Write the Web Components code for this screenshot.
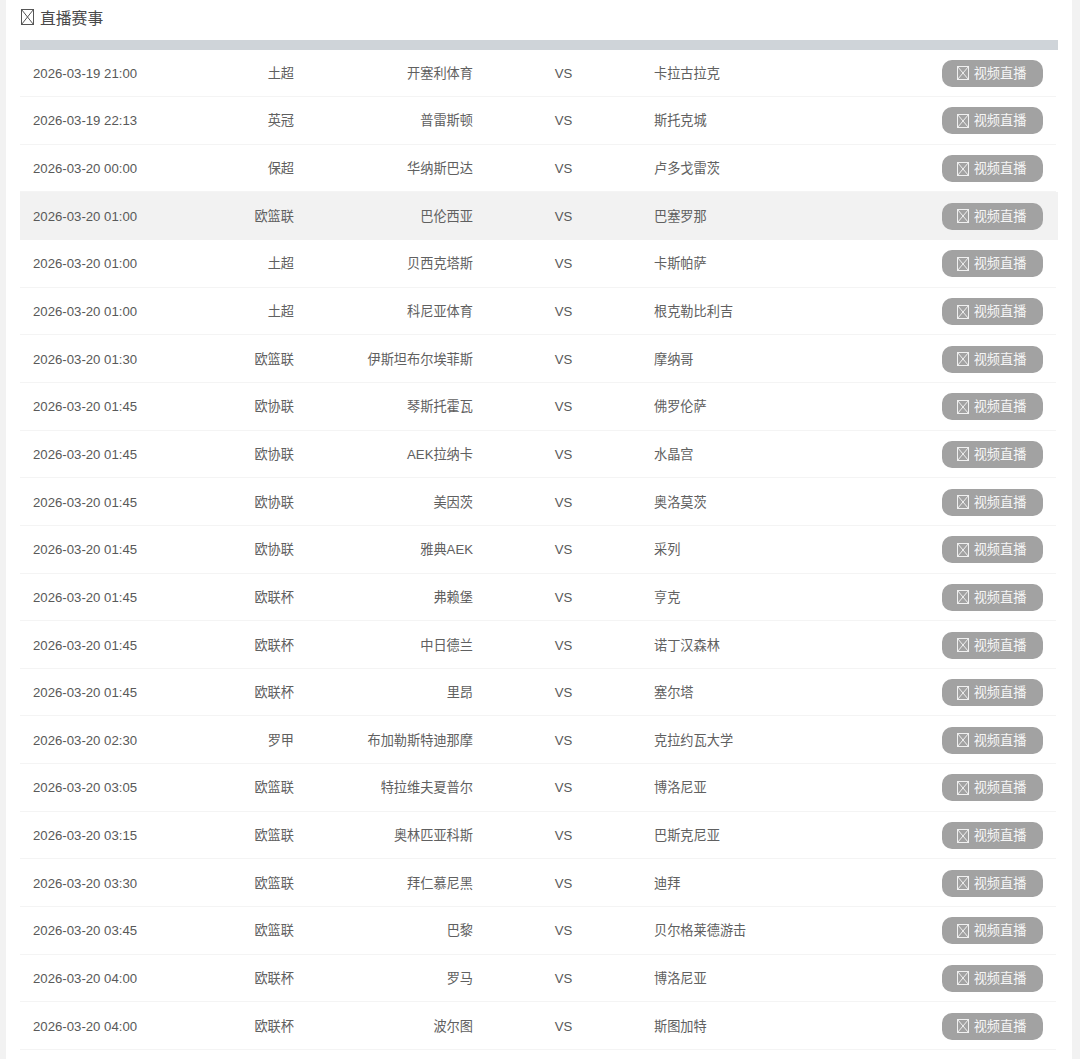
<!DOCTYPE html>
<html lang="zh-CN">
<head>
<meta charset="utf-8">
<title>直播赛事</title>
<style>
    html, body { margin: 0; padding: 0; background: #f2f2f2; }
    body { height: 1059px; overflow: hidden; font-family: "Liberation Sans", "Noto Sans CJK SC", sans-serif; }
</style>
</head>
<body>
<live-panel title-text="直播赛事" id="panel"></live-panel>

<script>
const MISSING_ICON = (w, h, color) => `
    <svg width="${w}" height="${h}" viewBox="0 0 ${w} ${h}" fill="none" stroke="${color}" stroke-width="1">
        <rect x=".5" y=".5" width="${w - 1}" height="${h - 1}"/>
        <path d="M.5 .5L${w - .5} ${h - .5}M${w - .5} .5L.5 ${h - .5}"/>
    </svg>`;

//button at the end of a row
class LiveButton extends HTMLElement {
    constructor() {
        super();
        this.attachShadow({mode: "open"});
        this.shadowRoot.innerHTML = `
            <style>
                :host {
                    display: inline-flex;
                    align-items: center;
                    justify-content: center;
                    gap: 5px;
                    width: 101px;
                    height: 27px;
                    box-sizing: border-box;
                    padding-right: 2px;
                    border-radius: 10px;
                    background: #a2a2a2;
                    color: #f6f6f6;
                    font-size: 13.2px;
                }
                svg { display: block; }
                span { display: block; padding-bottom: 2px; }
            </style>
            ${MISSING_ICON(12, 14, '#f0f0f0')}
            <span><slot></slot></span>
        `;
    }
}

//one match
class MatchRow extends HTMLElement {
    static get observedAttributes() {
        return ['time', 'league', 'home', 'away'];
    }
    constructor() {
        super();
        this.attachShadow({mode: "open"});
    }
    connectedCallback() {
        this.render();
    }
    attributeChangedCallback() {
        this.render();
    }
    render() {
        const a = n => this.getAttribute(n) || '';
        this.shadowRoot.innerHTML = `
            <style>
                :host {
                    display: grid;
                    grid-template-columns: 172px 89px 179px 181px 1fr auto;
                    align-items: center;
                    height: 47.65px;
                    box-sizing: border-box;
                    padding: 0 15px 0 13px;
                    color: #595959;
                    font-size: 13.2px;
                    background: #fff;
                    position: relative;
                }
                :host([active]) { background: #f2f2f2; }
                :host::after {
                    content: "";
                    position: absolute;
                    left: 0;
                    right: 2px;
                    bottom: 0;
                    height: 1px;
                    background: #f4f4f4;
                }
                :host([active])::after { display: none; }
                .right { text-align: right; }
                .vs { text-align: center; }
                .cjk { padding-bottom: 2px; color: #606060; }
            </style>
            <div>${a('time')}</div>
            <div class="right cjk">${a('league')}</div>
            <div class="right cjk">${a('home')}</div>
            <div class="vs">VS</div>
            <div class="cjk">${a('away')}</div>
            <live-button>视频直播</live-button>
        `;
    }
}

//white panel with title and bar
class LivePanel extends HTMLElement {
    constructor() {
        super();
        this.attachShadow({mode: "open"});
        this.shadowRoot.innerHTML = `
            <style>
                :host {
                    display: block;
                    box-sizing: border-box;
                    width: 1066px;
                    height: 1059px;
                    margin-left: 6px;
                    padding: 0 14px;
                    background: #fff;
                }
                h2 {
                    display: flex;
                    align-items: center;
                    gap: 6px;
                    margin: 0;
                    height: 40px;
                    padding: 0 0 6px 1px;
                    box-sizing: border-box;
                    font-size: 15.8px;
                    font-weight: normal;
                    color: #4a4a4a;
                }
                .bar { height: 9.5px; background: #cfd4d9; }
            </style>
            <h2>${MISSING_ICON(13, 16, '#555')}<span>${this.getAttribute('title-text')}</span></h2>
            <div class="bar"></div>
            <slot></slot>
        `;
    }
}

customElements.define('live-button', LiveButton);
customElements.define('match-row', MatchRow);
customElements.define('live-panel', LivePanel);

const matches = [
    ['2026-03-19 21:00', '土超', '开塞利体育', '卡拉古拉克'],
    ['2026-03-19 22:13', '英冠', '普雷斯顿', '斯托克城'],
    ['2026-03-20 00:00', '保超', '华纳斯巴达', '卢多戈雷茨'],
    ['2026-03-20 01:00', '欧篮联', '巴伦西亚', '巴塞罗那'],
    ['2026-03-20 01:00', '土超', '贝西克塔斯', '卡斯帕萨'],
    ['2026-03-20 01:00', '土超', '科尼亚体育', '根克勒比利吉'],
    ['2026-03-20 01:30', '欧篮联', '伊斯坦布尔埃菲斯', '摩纳哥'],
    ['2026-03-20 01:45', '欧协联', '琴斯托霍瓦', '佛罗伦萨'],
    ['2026-03-20 01:45', '欧协联', 'AEK拉纳卡', '水晶宫'],
    ['2026-03-20 01:45', '欧协联', '美因茨', '奥洛莫茨'],
    ['2026-03-20 01:45', '欧协联', '雅典AEK', '采列'],
    ['2026-03-20 01:45', '欧联杯', '弗赖堡', '亨克'],
    ['2026-03-20 01:45', '欧联杯', '中日德兰', '诺丁汉森林'],
    ['2026-03-20 01:45', '欧联杯', '里昂', '塞尔塔'],
    ['2026-03-20 02:30', '罗甲', '布加勒斯特迪那摩', '克拉约瓦大学'],
    ['2026-03-20 03:05', '欧篮联', '特拉维夫夏普尔', '博洛尼亚'],
    ['2026-03-20 03:15', '欧篮联', '奥林匹亚科斯', '巴斯克尼亚'],
    ['2026-03-20 03:30', '欧篮联', '拜仁慕尼黑', '迪拜'],
    ['2026-03-20 03:45', '欧篮联', '巴黎', '贝尔格莱德游击'],
    ['2026-03-20 04:00', '欧联杯', '罗马', '博洛尼亚'],
    ['2026-03-20 04:00', '欧联杯', '波尔图', '斯图加特']
];

const panel = document.getElementById('panel');
matches.forEach((m, i) => {
    const row = document.createElement('match-row');
    row.setAttribute('time', m[0]);
    row.setAttribute('league', m[1]);
    row.setAttribute('home', m[2]);
    row.setAttribute('away', m[3]);
    if (i === 3) row.setAttribute('active', '');
    panel.appendChild(row);
});
</script>
</body>
</html>
